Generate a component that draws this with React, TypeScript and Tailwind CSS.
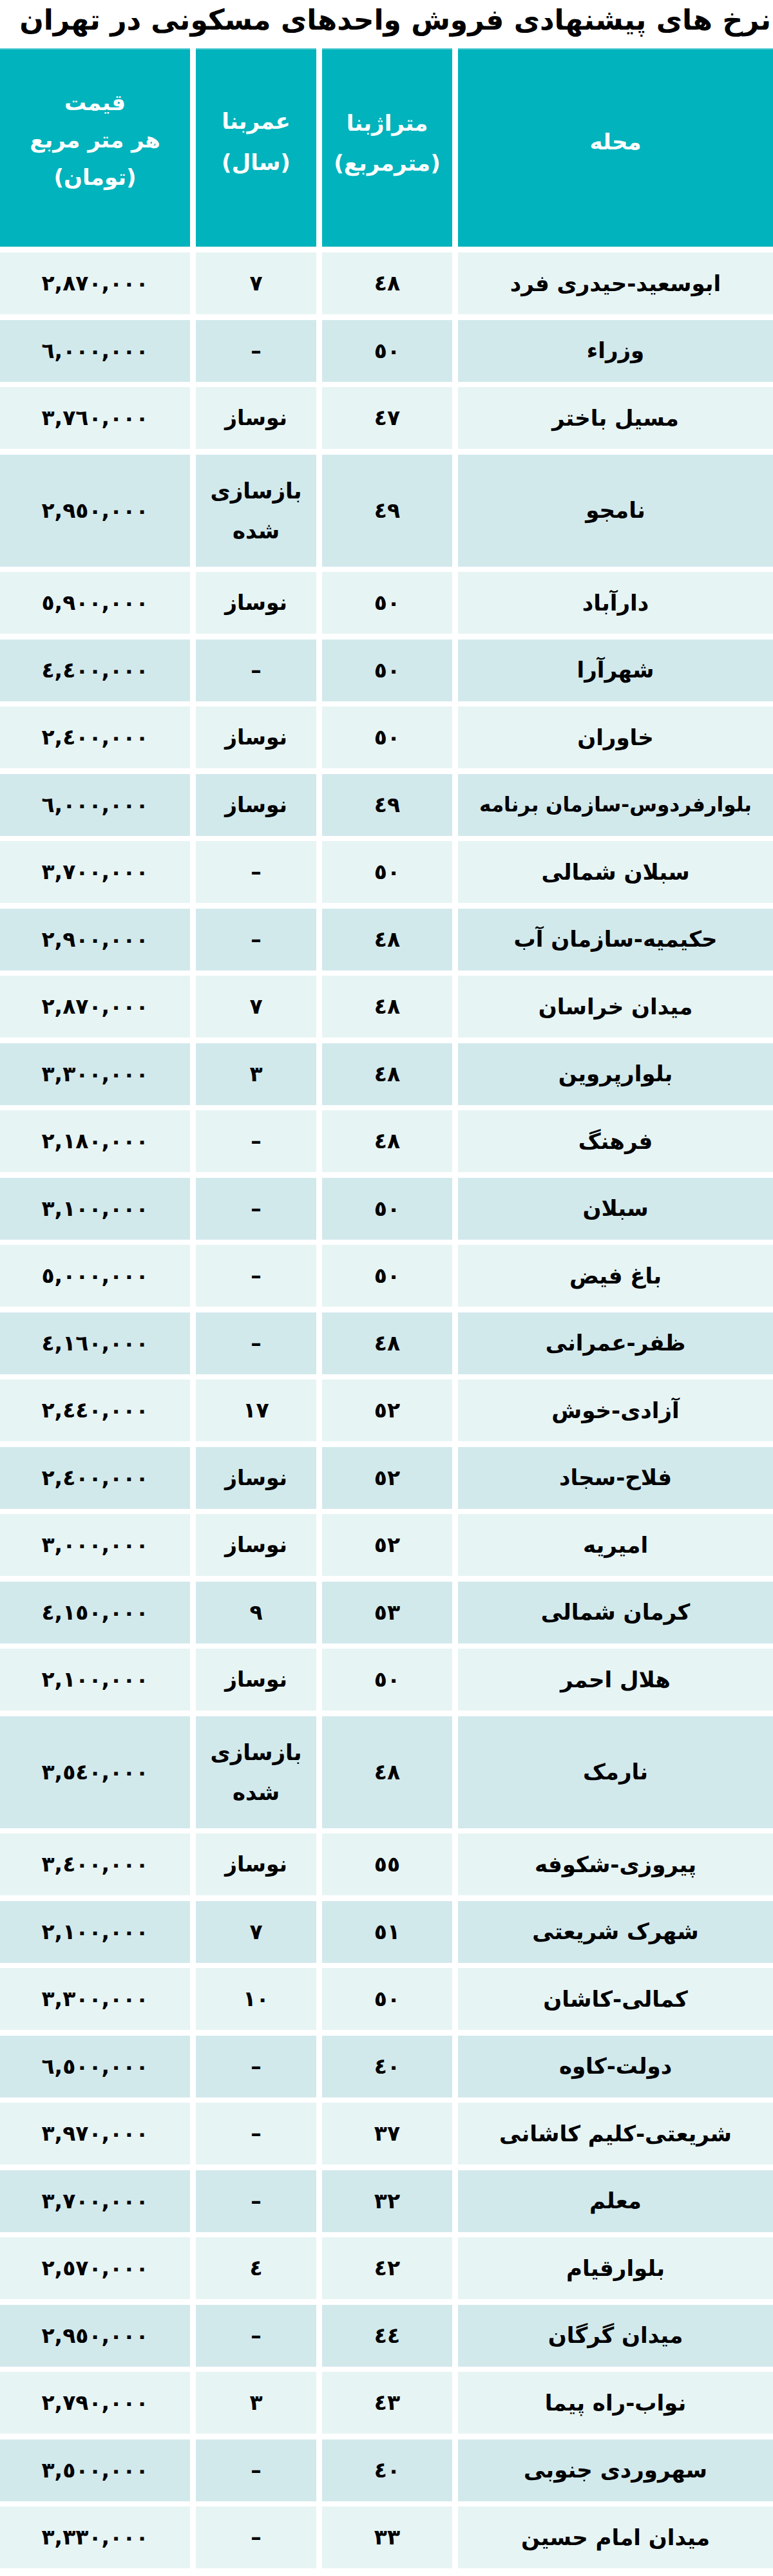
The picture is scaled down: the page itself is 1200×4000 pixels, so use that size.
type Row = {
  name: string;
  area: string;
  age: string;
  price: string;
  tall?: boolean;
  small?: boolean;
};

const rows: Row[] = [
  { name: 'ابوسعید-حیدری فرد', area: '٤٨', age: '٧', price: '٢,٨٧٠,٠٠٠' },
  { name: 'وزراء', area: '٥٠', age: '–', price: '٦,٠٠٠,٠٠٠' },
  { name: 'مسیل باختر', area: '٤٧', age: 'نوساز', price: '٣,٧٦٠,٠٠٠' },
  { name: 'نامجو', area: '٤٩', age: 'بازسازی شده', price: '٢,٩٥٠,٠٠٠', tall: true },
  { name: 'دارآباد', area: '٥٠', age: 'نوساز', price: '٥,٩٠٠,٠٠٠' },
  { name: 'شهرآرا', area: '٥٠', age: '–', price: '٤,٤٠٠,٠٠٠' },
  { name: 'خاوران', area: '٥٠', age: 'نوساز', price: '٢,٤٠٠,٠٠٠' },
  { name: 'بلوارفردوس-سازمان برنامه', area: '٤٩', age: 'نوساز', price: '٦,٠٠٠,٠٠٠', small: true },
  { name: 'سبلان شمالی', area: '٥٠', age: '–', price: '٣,٧٠٠,٠٠٠' },
  { name: 'حکیمیه-سازمان آب', area: '٤٨', age: '–', price: '٢,٩٠٠,٠٠٠' },
  { name: 'میدان خراسان', area: '٤٨', age: '٧', price: '٢,٨٧٠,٠٠٠' },
  { name: 'بلوارپروین', area: '٤٨', age: '٣', price: '٣,٣٠٠,٠٠٠' },
  { name: 'فرهنگ', area: '٤٨', age: '–', price: '٢,١٨٠,٠٠٠' },
  { name: 'سبلان', area: '٥٠', age: '–', price: '٣,١٠٠,٠٠٠' },
  { name: 'باغ فیض', area: '٥٠', age: '–', price: '٥,٠٠٠,٠٠٠' },
  { name: 'ظفر-عمرانی', area: '٤٨', age: '–', price: '٤,١٦٠,٠٠٠' },
  { name: 'آزادی-خوش', area: '٥٢', age: '١٧', price: '٢,٤٤٠,٠٠٠' },
  { name: 'فلاح-سجاد', area: '٥٢', age: 'نوساز', price: '٢,٤٠٠,٠٠٠' },
  { name: 'امیریه', area: '٥٢', age: 'نوساز', price: '٣,٠٠٠,٠٠٠' },
  { name: 'کرمان شمالی', area: '٥٣', age: '٩', price: '٤,١٥٠,٠٠٠' },
  { name: 'هلال احمر', area: '٥٠', age: 'نوساز', price: '٢,١٠٠,٠٠٠' },
  { name: 'نارمک', area: '٤٨', age: 'بازسازی شده', price: '٣,٥٤٠,٠٠٠', tall: true },
  { name: 'پیروزی-شکوفه', area: '٥٥', age: 'نوساز', price: '٣,٤٠٠,٠٠٠' },
  { name: 'شهرک شریعتی', area: '٥١', age: '٧', price: '٢,١٠٠,٠٠٠' },
  { name: 'کمالی-کاشان', area: '٥٠', age: '١٠', price: '٣,٣٠٠,٠٠٠' },
  { name: 'دولت-کاوه', area: '٤٠', age: '–', price: '٦,٥٠٠,٠٠٠' },
  { name: 'شریعتی-کلیم کاشانی', area: '٣٧', age: '–', price: '٣,٩٧٠,٠٠٠' },
  { name: 'معلم', area: '٣٢', age: '–', price: '٣,٧٠٠,٠٠٠' },
  { name: 'بلوارقیام', area: '٤٢', age: '٤', price: '٢,٥٧٠,٠٠٠' },
  { name: 'میدان گرگان', area: '٤٤', age: '–', price: '٢,٩٥٠,٠٠٠' },
  { name: 'نواب-راه پیما', area: '٤٣', age: '٣', price: '٢,٧٩٠,٠٠٠' },
  { name: 'سهروردی جنوبی', area: '٤٠', age: '–', price: '٣,٥٠٠,٠٠٠' },
  { name: 'میدان امام حسین', area: '٣٣', age: '–', price: '٣,٣٣٠,٠٠٠' },
];

// columns run right to left: neighbourhood, area, age, price
const cols = 'grid grid-cols-[1fr_202px_187px_295px] gap-x-[9px]';
const font = { fontFamily: '"DejaVu Sans", "Noto Sans", sans-serif' };

function Cell({ children, bg }: { children: React.ReactNode; bg: string }) {
  return (
    <div className={`flex items-center justify-center text-center ${bg}`}>
      {children}
    </div>
  );
}

export default function App() {
  return (
    <div dir="rtl" className="w-[1200px] bg-white text-black" style={font}>
      {/* title */}
      <div className="h-[75px] flex items-start pr-[3px] overflow-hidden">
        <h1 className="text-[44px] font-bold leading-[62px] whitespace-nowrap">
          نرخ های پیشنهادی فروش واحدهای مسکونی در تهران
        </h1>
      </div>

      {/* header */}
      <div className={`${cols} h-[308px] text-white font-bold text-[34px]`}>
        <div className="bg-[#00b3bc] border-t-2 border-[#4cc8cf] flex items-center justify-center pb-[20px]">
          محله
        </div>
        <div className="bg-[#00b3bc] border-t-2 border-[#4cc8cf] flex items-center justify-center text-center leading-[62px] pb-[16px]">
          <div>
            <div>متراژبنا</div>
            <div>(مترمربع)</div>
          </div>
        </div>
        <div className="bg-[#00b3bc] border-t-2 border-[#4cc8cf] flex items-center justify-center text-center leading-[64px] pb-[20px]">
          <div>
            <div>عمربنا</div>
            <div>(سال)</div>
          </div>
        </div>
        <div className="bg-[#00b3bc] border-t-2 border-[#4cc8cf] flex items-center justify-center text-center leading-[58px] pb-[26px]">
          <div>
            <div>قیمت</div>
            <div>هر متر مربع</div>
            <div>(تومان)</div>
          </div>
        </div>
      </div>

      {/* rows */}
      <div className="flex flex-col gap-y-[8.5px] pt-[9px]">
        {rows.map((r, i) => {
          const bg = i % 2 === 0 ? 'bg-[#e7f4f4]' : 'bg-[#d2e9ec]';
          return (
            <div
              key={i}
              className={`${cols} ${r.tall ? 'h-[174px]' : 'h-[96px]'} font-bold`}
            >
              <Cell bg={bg}>
                <span className={r.small ? 'text-[31px]' : 'text-[34px]'}>{r.name}</span>
              </Cell>
              <Cell bg={bg}>
                <span className="text-[33px]">{r.area}</span>
              </Cell>
              <Cell bg={bg}>
                {r.tall ? (
                  <div className="leading-[62px] text-[34px]">
                    <div>بازسازی</div>
                    <div>شده</div>
                  </div>
                ) : (
                  <span className="text-[33px]">{r.age}</span>
                )}
              </Cell>
              <Cell bg={bg}>
                <span dir="ltr" className="text-[33px]">
                  {r.price}
                </span>
              </Cell>
            </div>
          );
        })}
      </div>
    </div>
  );
}
